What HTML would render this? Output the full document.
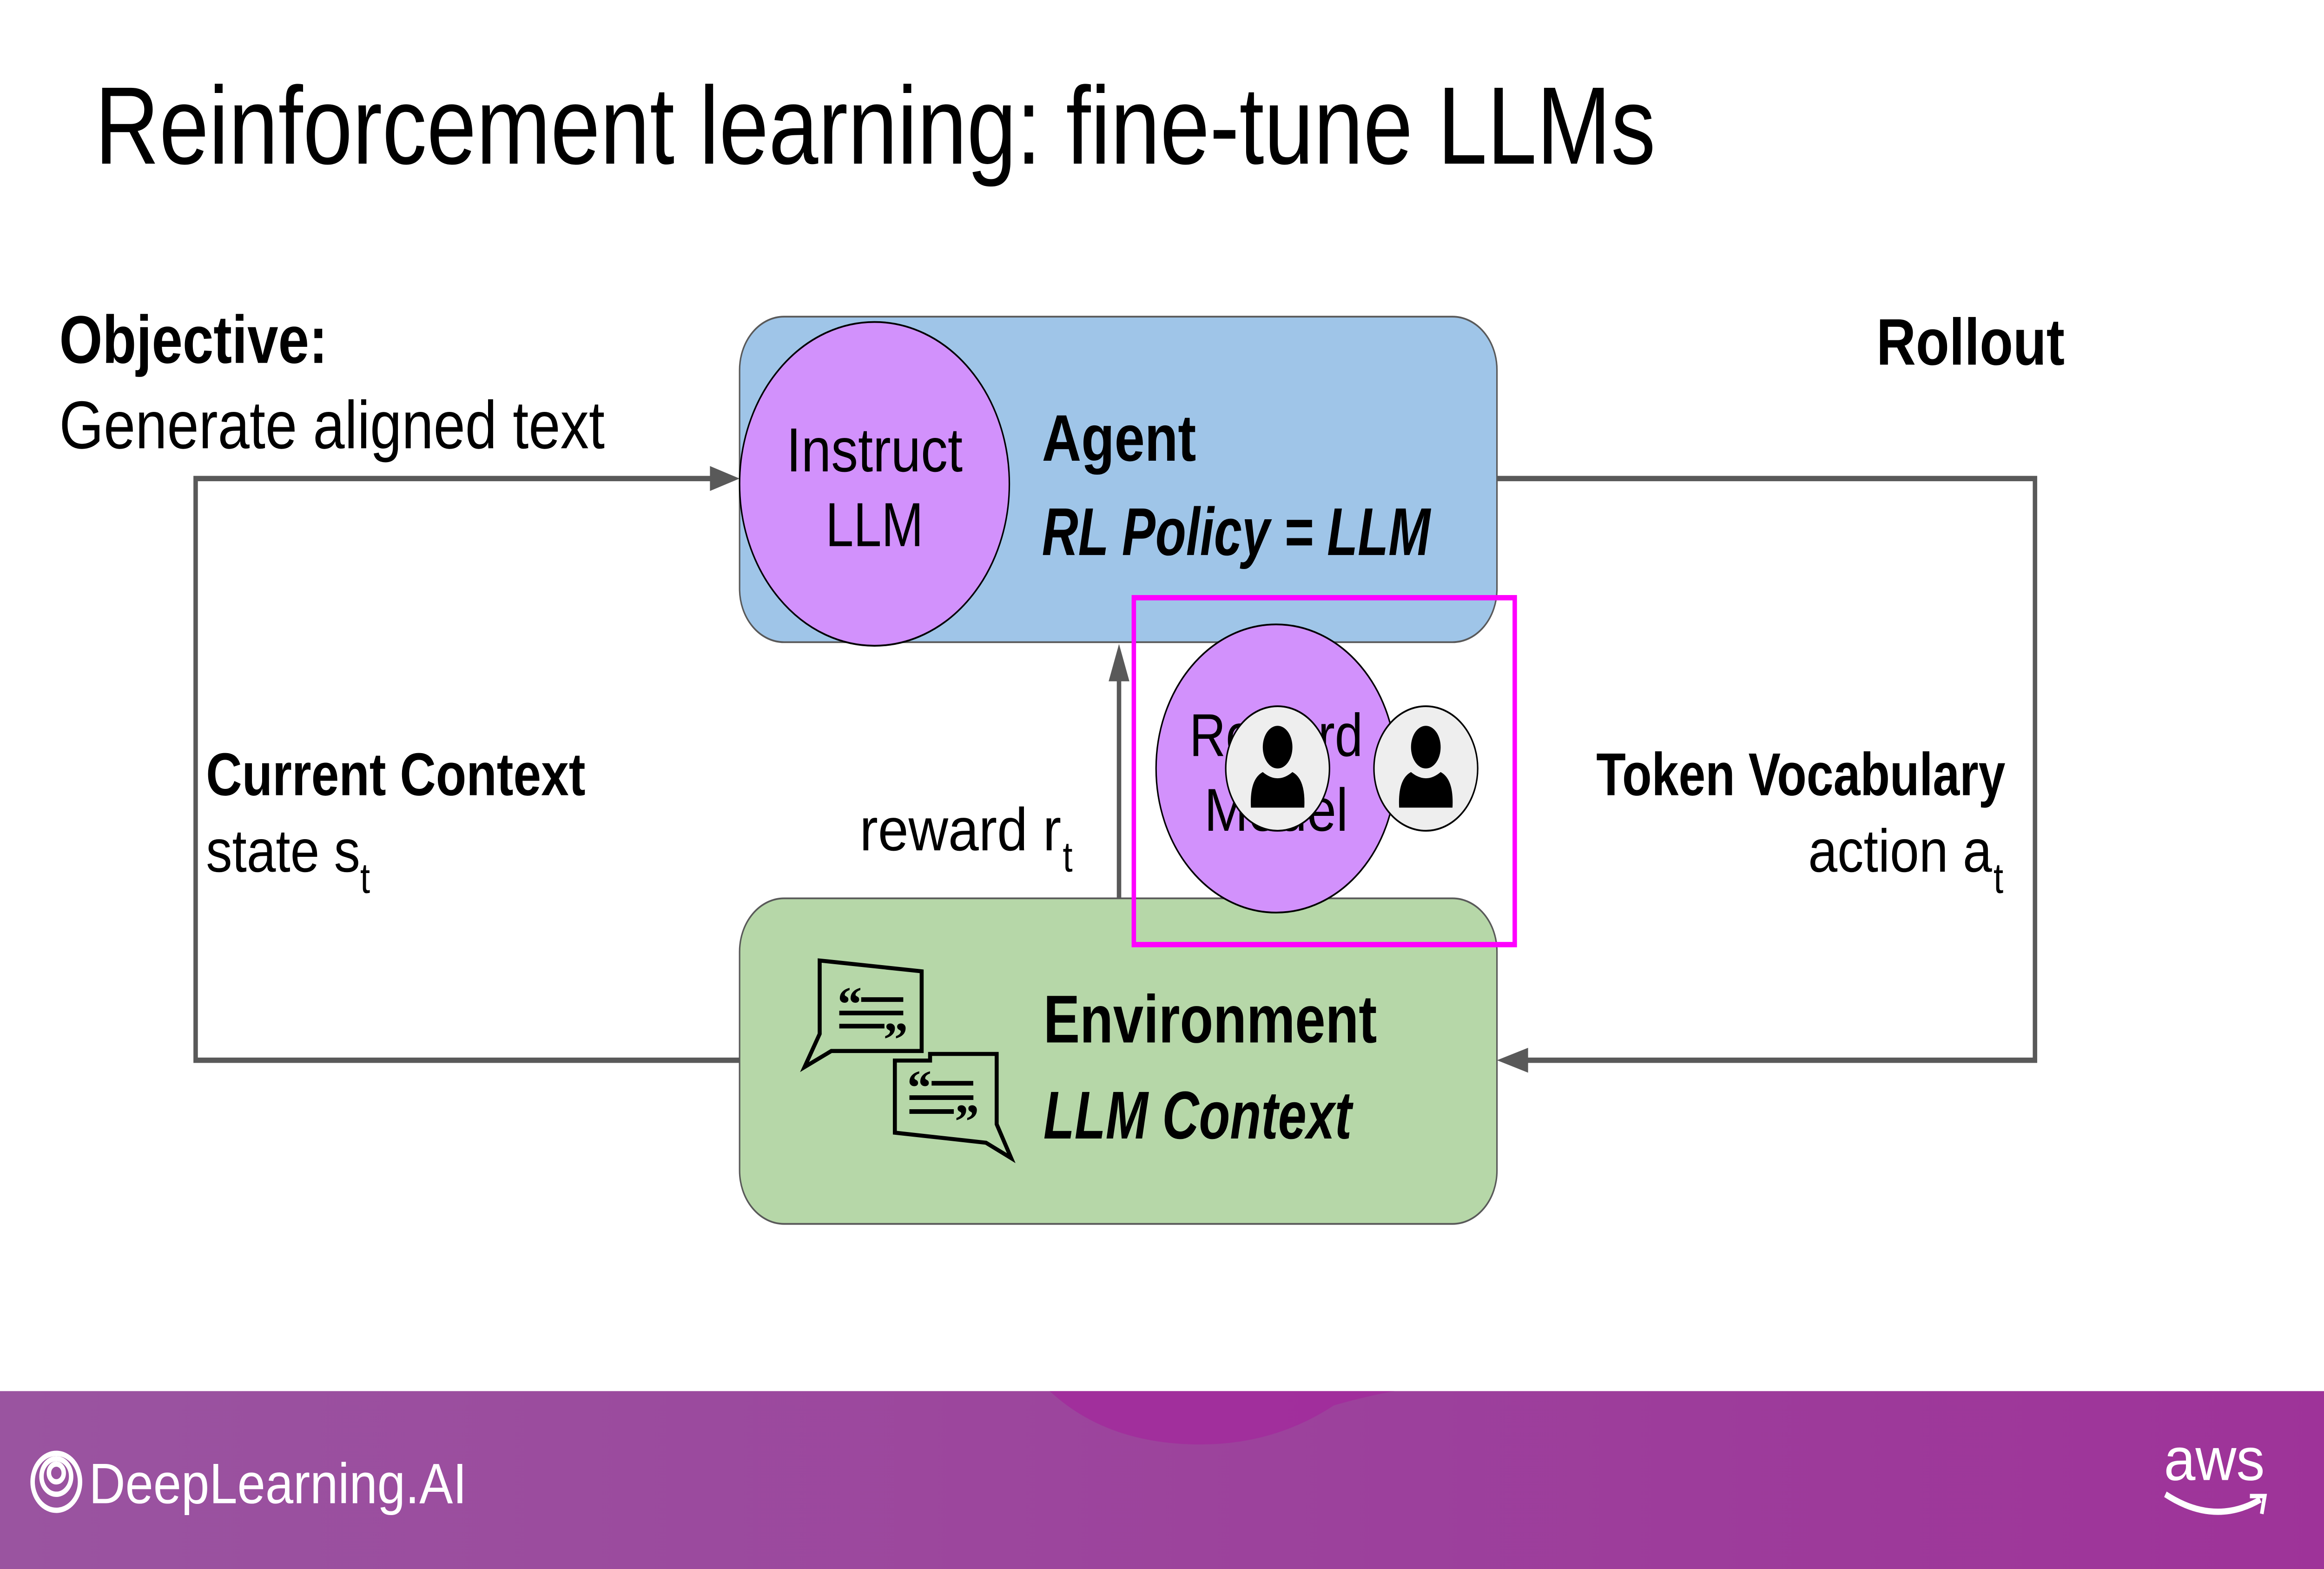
<!DOCTYPE html>
<html><head><meta charset="utf-8"><style>html,body{margin:0;padding:0;background:#fff;overflow:hidden;width:100vw;height:100vh}#main{display:block;position:absolute;left:0;top:0;width:100vw;height:100vh}</style></head>
<body>
<svg id="main" viewBox="0 0 1568 882" preserveAspectRatio="none" xmlns="http://www.w3.org/2000/svg" font-family="'Liberation Sans', sans-serif">
<defs>
<linearGradient id="fg" x1="0" x2="1" y1="0" y2="0"><stop offset="0" stop-color="#9a54a0"/><stop offset="1" stop-color="#9e3399"/></linearGradient>
<clipPath id="fc"><rect x="0" y="782" width="1568" height="100"/></clipPath>
</defs>
<rect width="1568" height="882" fill="#fff"/>
<text x="64" y="92" font-size="62" textLength="1053" lengthAdjust="spacingAndGlyphs">Reinforcement learning: fine-tune LLMs</text>

<g stroke="#595959" stroke-width="3" fill="none">
<polyline points="482,269 132,269 132,596 499,596"/>
<polyline points="1010,269 1373,269 1373,596 1028,596"/>
<line x1="755" y1="505" x2="755" y2="382"/>
</g>
<polygon points="499,269 479,262 479,276" fill="#595959"/>
<polygon points="1010,596 1031,589 1031,603" fill="#595959"/>
<polygon points="755,362 748,383 762,383" fill="#595959"/>

<rect x="499" y="178" width="511" height="183" rx="30" fill="#9fc5e8" stroke="#595959" stroke-width="1"/>
<circle cx="590" cy="272" r="91" fill="#d291fc" stroke="#000" stroke-width="1"/>
<text x="590" y="265" font-size="35" text-anchor="middle" textLength="119" lengthAdjust="spacingAndGlyphs">Instruct</text>
<text x="590" y="307" font-size="35" text-anchor="middle" textLength="66" lengthAdjust="spacingAndGlyphs">LLM</text>
<text x="703" y="259" font-size="37" font-weight="bold" textLength="104" lengthAdjust="spacingAndGlyphs">Agent</text>
<text x="703" y="312" font-size="38" font-weight="bold" font-style="italic" textLength="262" lengthAdjust="spacingAndGlyphs">RL Policy = LLM</text>

<rect x="499" y="505" width="511" height="183" rx="30" fill="#b6d7a8" stroke="#595959" stroke-width="1"/>
<text x="704" y="586" font-size="38" font-weight="bold" textLength="225" lengthAdjust="spacingAndGlyphs">Environment</text>
<text x="704" y="640" font-size="38" font-weight="bold" font-style="italic" textLength="208" lengthAdjust="spacingAndGlyphs">LLM Context</text>

<g transform="translate(533,533) scale(0.1033,0.0868)">
<g fill="none" stroke="#000" stroke-width="26" stroke-linejoin="miter">
<path d="M194,80 L860,150 L860,666 L270,666 L95,770 L194,555 Z"/>
<path d="M685,728 L915,728 L915,685 L1350,685 L1350,1140 L1445,1360 L1280,1260 L685,1195 Z"/>
</g>
<g fill="#000">
<rect x="465" y="318" width="275" height="30"/><rect x="322" y="405" width="418" height="30"/><rect x="322" y="490" width="295" height="30"/>
<rect x="925" y="860" width="272" height="30"/><rect x="780" y="953" width="418" height="30"/><rect x="780" y="1043" width="290" height="30"/>
</g>
<text x="310" y="470" font-size="320" font-family="'Liberation Serif',serif" font-weight="bold">“</text>
<text x="610" y="700" font-size="320" font-family="'Liberation Serif',serif" font-weight="bold">”</text>
<text x="765" y="1010" font-size="320" font-family="'Liberation Serif',serif" font-weight="bold">“</text>
<text x="1075" y="1230" font-size="320" font-family="'Liberation Serif',serif" font-weight="bold">”</text>
</g>

<ellipse cx="861" cy="432" rx="81" ry="81" fill="#d291fc" stroke="#000" stroke-width="1"/>
<text x="861" y="425" font-size="34" text-anchor="middle" textLength="117" lengthAdjust="spacingAndGlyphs">Reward</text>
<text x="861" y="467" font-size="34" text-anchor="middle" textLength="97" lengthAdjust="spacingAndGlyphs">Model</text>
<g stroke="#000" stroke-width="1" fill="#eeeeee">
<circle cx="862" cy="432" r="35"/>
<circle cx="962" cy="432" r="35"/>
</g>
<g fill="#000">
<ellipse cx="862" cy="420" rx="10" ry="12"/>
<path d="M844,454 Q843,438 852,434 Q862,441 872,434 Q881,438 880,454 Z"/>
<ellipse cx="962" cy="420" rx="10" ry="12"/>
<path d="M944,454 Q943,438 952,434 Q962,441 972,434 Q981,438 980,454 Z"/>
</g>
<rect x="765" y="336" width="257" height="195" fill="none" stroke="#ff00ff" stroke-width="3"/>

<text x="40" y="204" font-size="38" font-weight="bold" textLength="181" lengthAdjust="spacingAndGlyphs">Objective:</text>
<text x="40" y="252" font-size="38" textLength="368" lengthAdjust="spacingAndGlyphs">Generate aligned text</text>
<text x="1266" y="205" font-size="37" font-weight="bold" textLength="127" lengthAdjust="spacingAndGlyphs">Rollout</text>
<text x="139" y="447" font-size="34" font-weight="bold" textLength="256" lengthAdjust="spacingAndGlyphs">Current Context</text>
<text x="139" y="490" font-size="34" textLength="104" lengthAdjust="spacingAndGlyphs">state  s</text>
<text x="243" y="502" font-size="24">t</text>
<text x="580" y="478" font-size="34" textLength="136" lengthAdjust="spacingAndGlyphs">reward  r</text>
<text x="717" y="490" font-size="24">t</text>
<text x="1077" y="447" font-size="34" font-weight="bold" textLength="276" lengthAdjust="spacingAndGlyphs">Token Vocabulary</text>
<text x="1220" y="490" font-size="34" textLength="124" lengthAdjust="spacingAndGlyphs">action  a</text>
<text x="1345" y="502" font-size="24">t</text>

<rect x="0" y="782" width="1568" height="100" fill="url(#fg)"/>
<g clip-path="url(#fc)">
<path d="M700,775 Q740,812 810,812 Q860,812 900,790 Q950,778 1010,775 Z" fill="#a22c9c" opacity="0.85"/>
</g>
<g fill="none" stroke="#fff" stroke-width="3">
<circle cx="38" cy="833" r="16"/><circle cx="38" cy="830" r="10"/><circle cx="38" cy="828" r="5"/>
</g>
<text x="60" y="845" font-size="32" fill="#fff" textLength="255" lengthAdjust="spacingAndGlyphs">DeepLearning.AI</text>
<text x="1460" y="832" font-size="34" fill="#fff" textLength="68" lengthAdjust="spacingAndGlyphs">aws</text>
<path d="M1461,840 Q1494,858 1525,843" stroke="#fff" stroke-width="3.5" fill="none"/>
<path d="M1518,841 L1528,841 L1526,851" stroke="#fff" stroke-width="2.5" fill="none"/>
</svg>
</body></html>
